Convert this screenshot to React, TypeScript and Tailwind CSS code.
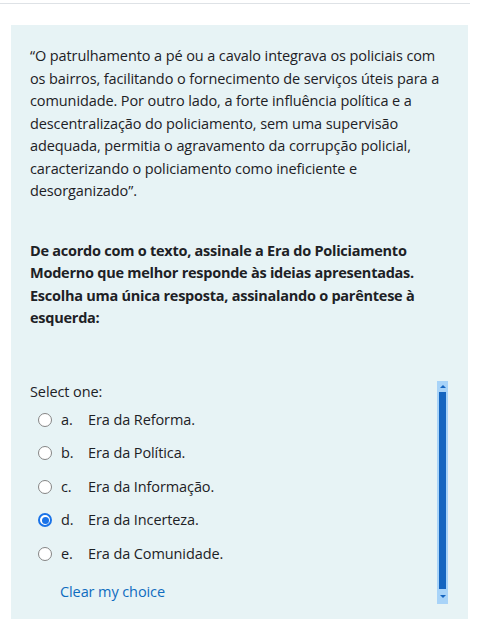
import React from 'react';

type Option = { letter: string; label: string; checked?: boolean };

const options: Option[] = [
    { letter: 'a.', label: 'Era da Reforma.' },
    { letter: 'b.', label: 'Era da Política.' },
    { letter: 'c.', label: 'Era da Informação.' },
    { letter: 'd.', label: 'Era da Incerteza.', checked: true },
    { letter: 'e.', label: 'Era da Comunidade.' },
];

const quoteLines = [
    '“O patrulhamento a pé ou a cavalo integrava os policiais com',
    'os bairros, facilitando o fornecimento de serviços úteis para a',
    'comunidade. Por outro lado, a forte influência política e a',
    'descentralização do policiamento, sem uma supervisão',
    'adequada, permitia o agravamento da corrupção policial,',
    'caracterizando o policiamento como ineficiente e',
    'desorganizado”.',
];

const questionLines = [
    'De acordo com o texto, assinale a Era do Policiamento',
    'Moderno que melhor responde às ideias apresentadas.',
    'Escolha uma única resposta, assinalando o parêntese à',
    'esquerda:',
];

function Radio({ checked }: { checked?: boolean }) {
    if (checked) {
        return (
            <span className="w-[14px] h-[14px] rounded-full border-[2px] border-[#1a73e8] bg-white flex items-center justify-center shrink-0">
                <span className="w-[7px] h-[7px] rounded-full bg-[#1a73e8]" />
            </span>
        );
    }
    return <span className="w-[14px] h-[14px] rounded-full border border-[#858585] bg-white shrink-0" />;
}

// Fake styled scrollbar (light blue track, blue thumb)
function ScrollBar() {
    return (
        <div className="w-[11px] h-[223px] bg-[#a8d3f8] flex flex-col items-center shrink-0">
            <div className="h-[11px] flex items-center justify-center">
                <span className="w-0 h-0 border-l-[3px] border-r-[3px] border-b-[3px] border-l-transparent border-r-transparent border-b-[#1565c0]" />
            </div>
            <div className="w-[7px] flex-1 bg-[#1565c0]" />
            <div className="h-[15px] flex items-center justify-center">
                <span className="w-0 h-0 border-l-[3px] border-r-[3px] border-t-[3px] border-l-transparent border-r-transparent border-t-[#1565c0]" />
            </div>
        </div>
    );
}

export default function App() {
    return (
        <div className="w-[477px] h-[630px] bg-white overflow-hidden text-[#1d2125] text-[14.5px] tracking-[-0.1px] leading-[22.5px]" style={{ fontFamily: '"Open Sans", "Noto Sans", sans-serif' }}>
            <div className="pt-[3px]">
                <div className="w-[470px] h-px bg-[#dee2e6]" />
            </div>

            <div className="ml-[11px] mt-[21px] w-[457px] bg-[#e7f3f5] pl-[19px] pr-[20px] pt-[20px] pb-[15px]">
                <p>
                    {quoteLines.map((l) => (
                        <span key={l} className="block whitespace-nowrap">{l}</span>
                    ))}
                </p>

                <p className="mt-[37px] font-bold tracking-[-0.25px]">
                    {questionLines.map((l) => (
                        <span key={l} className="block whitespace-nowrap">{l}</span>
                    ))}
                </p>

                <div className="mt-[51px] flex items-start">
                    <div className="flex-1">
                        <div>Select one:</div>
                        <div className="flex flex-col">
                            {options.map((o) => (
                                <div key={o.letter} className="h-[33.5px] flex items-center pl-[8px]">
                                    <Radio checked={o.checked} />
                                    <span className="ml-[9px] w-[27px]">{o.letter}</span>
                                    <span>{o.label}</span>
                                </div>
                            ))}
                        </div>
                        <div className="mt-[10px] pl-[30px] text-[#0f6cbf]">Clear my choice</div>
                    </div>
                    <ScrollBar />
                </div>
            </div>
        </div>
    );
}
